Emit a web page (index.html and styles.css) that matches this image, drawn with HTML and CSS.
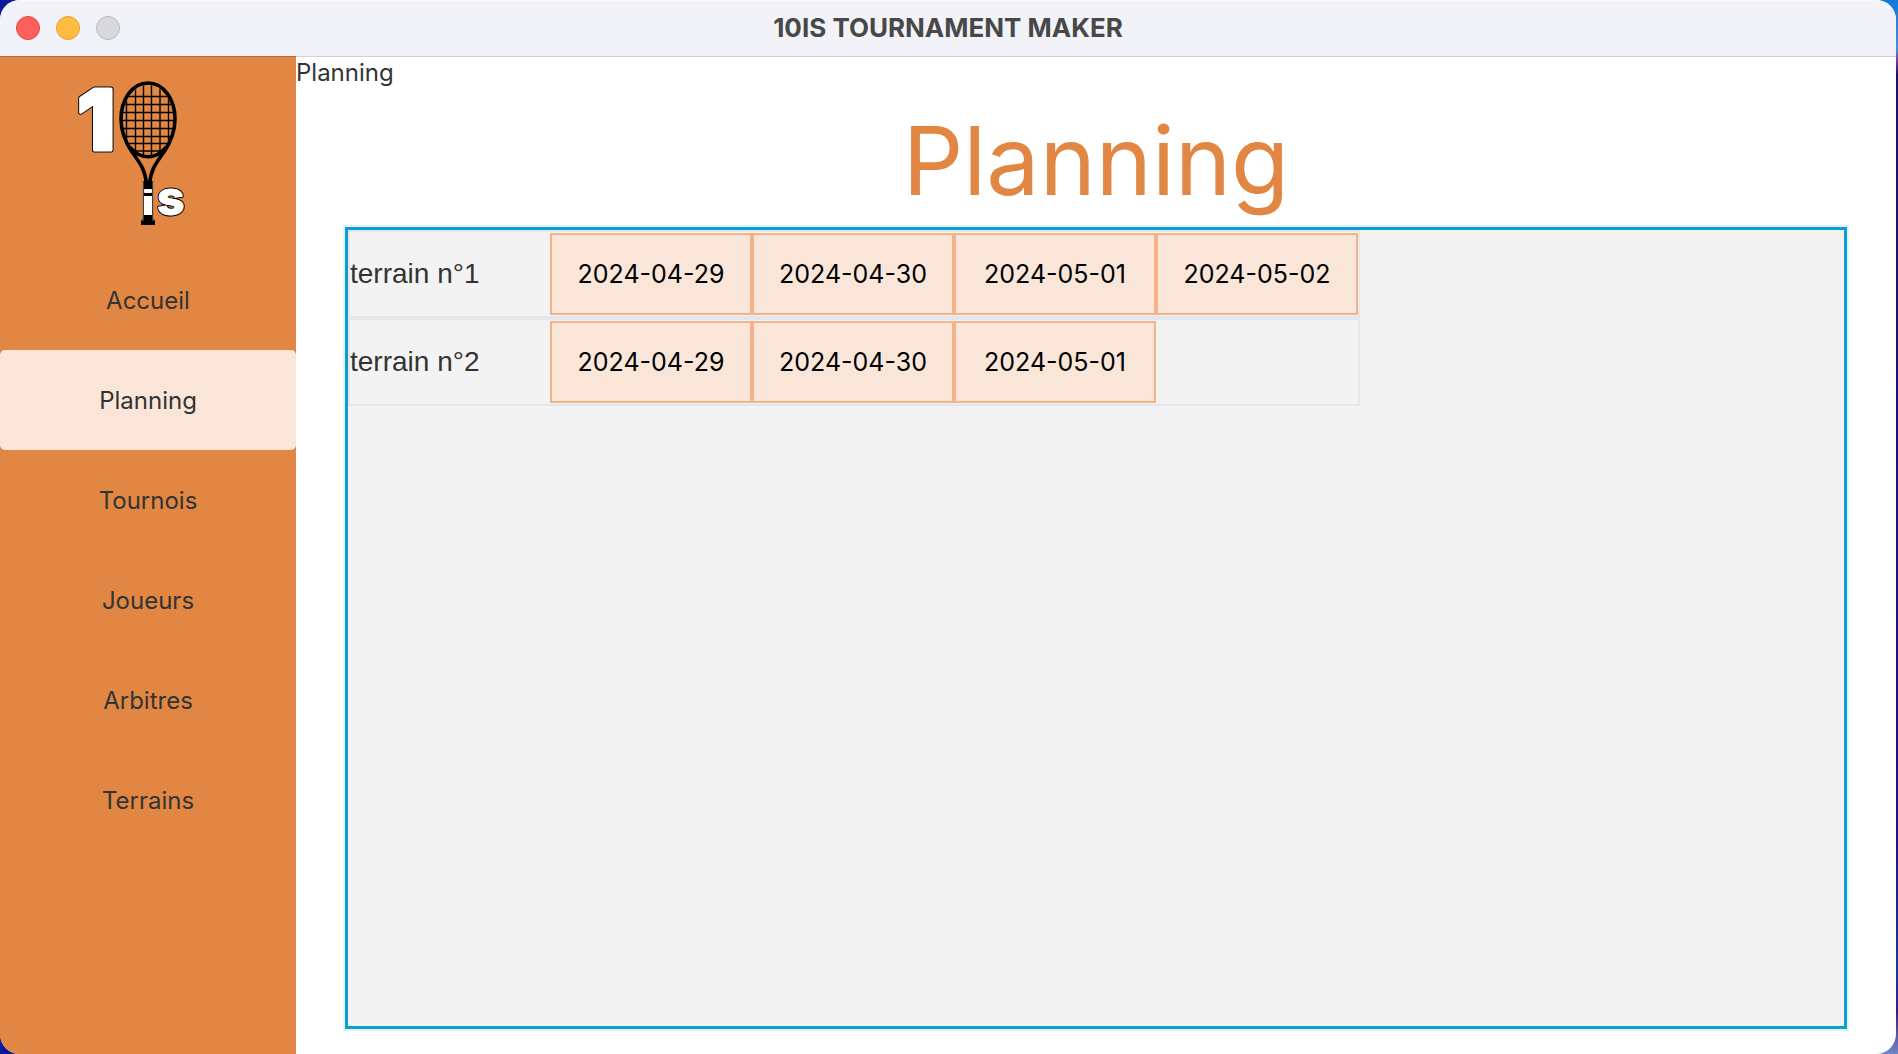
FILE: index.html
```html
<!DOCTYPE html>
<html lang="fr">
<head>
<meta charset="utf-8">
<title>10IS TOURNAMENT MAKER</title>
<link rel="stylesheet" href="styles.css">
</head>
<body>
<div class="window">
  <header class="titlebar">
    <div class="lights">
      <button class="light close" type="button" aria-label="Fermer"></button>
      <button class="light minimize" type="button" aria-label="Réduire"></button>
      <button class="light zoom" type="button" aria-label="Agrandir" disabled></button>
    </div>
    <div class="window-title">10IS TOURNAMENT MAKER</div>
  </header>
  <div class="content">
    <aside class="sidebar">
      <svg class="logo" viewBox="-16 0 148 148" width="148" height="148" role="img" aria-label="10is">
        <g class="digit">
          <text class="outline" x="1" y="69">1</text>
          <text class="fill" x="1" y="69">1</text>
        </g>
        <clipPath id="head"><ellipse cx="72" cy="41" rx="26" ry="37"/></clipPath>
        <path clip-path="url(#head)" fill="none" stroke="#000" stroke-width="1.4" d="M50.500 2V80M59.500 2V80M67.500 2V80M75.500 2V80M84 2V80M92.500 2V80M44 15.500H100M44 23.500H100M44 31.500H100M44 39.500H100M44 47.500H100M44 55.500H100M44 62.500H100M44 70H100"/>
        <path fill="none" stroke="#000" stroke-width="3.600" d="M72 2C56 2 45 19 45 38C45 52 50 62 56 71C64 82 69 88 70.500 103M72 2C88 2 99 19 99 38C99 52 94 62 88 71C80 82 75 88 73.500 103M54 66C64 79 80 79 90 66"/>
        <path d="M67 100H77V137L79 140V144H65V140L67 137Z"/>
        <path d="M67 100V140M77 100V140" stroke="#8b7c70" stroke-width="1"/>
        <path fill="#fff" d="M69 108H75Q76 108 76 109V111Q76 112 75 112H69Q68 112 68 111V109Q68 108 69 108ZM68 115H76V134H68Z"/>
        <g class="letter">
          <text class="outline" x="81" y="134">s</text>
          <text class="fill" x="81" y="134">s</text>
        </g>
      </svg>
      <nav class="menu">
        <a href="#accueil">Accueil</a>
        <a href="#planning" class="active" aria-current="page">Planning</a>
        <a href="#tournois">Tournois</a>
        <a href="#joueurs">Joueurs</a>
        <a href="#arbitres">Arbitres</a>
        <a href="#terrains">Terrains</a>
      </nav>
    </aside>
    <main class="main">
      <div class="crumb">Planning</div>
      <h1>Planning</h1>
      <section class="pane" tabindex="0">
        <table class="schedule">
          <tbody>
            <tr><th scope="row">terrain n°1</th><td class="day">2024-04-29</td><td class="day">2024-04-30</td><td class="day">2024-05-01</td><td class="day">2024-05-02</td></tr>
            <tr><th scope="row">terrain n°2</th><td class="day">2024-04-29</td><td class="day">2024-04-30</td><td class="day">2024-05-01</td><td></td></tr>
          </tbody>
        </table>
      </section>
    </main>
  </div>
</div>
</body>
</html>
```
FILE: styles.css
```css
* { box-sizing: border-box; }

body {
  margin: 0;
  background: linear-gradient(90deg, #0a1a9c 0 50%, transparent 50%),
    linear-gradient(#1578dc 0, #3f8fe0 50px, #7a3aa8 60px, #1a1078 75px, #23108c 80%, #123a9c 92%, #3a1a90 96%, #6f86c4);
  color: #333;
  font-family: Inter, "Liberation Sans", sans-serif;
  font-size: 24px;
}

.window {
  display: flex;
  flex-direction: column;
  min-height: 100vh;
  margin-right: 2px;
  border-radius: 20px;
  background: #fff;
  overflow: hidden;
}

.titlebar {
  display: grid;
  grid-template-columns: 1fr auto 1fr;
  align-items: center;
  height: 57px;
  padding: 0 16px 2px;
  background: #f2f3f9;
  border-top: 1px solid #fafafd;
  border-bottom: 1px solid #d2d2d5;
}

.lights { display: flex; gap: 16px; }

.light {
  width: 24px;
  height: 24px;
  padding: 0;
  border: 1px solid;
  border-radius: 50%;
}
.close { background: #ff605c; border-color: #e2463f; }
.minimize { background: #fdbc40; border-color: #dfa033; }
.zoom { background: #d8d9de; border-color: #b9babf; }

.window-title {
  color: #484848;
  font-size: 26px;
  font-weight: 700;
  line-height: 32px;
}

.content { display: flex; flex: 1; }

.sidebar {
  width: 296px;
  flex: none;
  background: #e18743;
  box-shadow: 0 -1px #b9672b;
  z-index: 1;
}

.logo {
  display: block;
  margin: 24px auto 21px 60px;
  overflow: visible;
}
.logo text { font-family: Inter, "Liberation Sans", sans-serif; stroke-linejoin: round; }
.digit { font-size: 84px; font-weight: 900; }
.letter { font-size: 48px; font-weight: 800; }
.outline { fill: #000; stroke: #000; }
.fill { fill: #fff; stroke: #fff; }
.digit .outline { stroke-width: 5px; }
.digit .fill { stroke-width: 3px; }
.letter .outline { stroke-width: 3px; }
.letter .fill { stroke-width: 1px; }

.menu a {
  display: flex;
  align-items: center;
  justify-content: center;
  height: 100px;
  border-radius: 5px;
  color: #333;
  text-decoration: none;
}
.menu .active { background: #f9e6d8; }

.main {
  display: flex;
  flex: 1;
  flex-direction: column;
  min-width: 0;
}

.crumb { line-height: 32px; }

h1 {
  margin: 12px 0 6px;
  color: #e18743;
  font-size: 95px;
  font-weight: 400;
  line-height: 120px;
  text-align: center;
}

.pane {
  flex: 1;
  margin: 0 49px 25px;
  border: 3px solid #079fd6;
  outline: 2px solid #e1f3f9;
  background: #f3f3f3;
  overflow: auto;
}

.schedule, .schedule tbody { display: block; }

.schedule tr {
  display: flex;
  width: max-content;
  padding: 1px 0;
  border: 2px solid #e2e7eb;
}

.schedule th {
  display: flex;
  align-items: center;
  width: 200px;
  padding: 0;
  font-family: "Liberation Sans", Arial, sans-serif;
  font-size: 28px;
  font-weight: 400;
}

.schedule td {
  display: flex;
  align-items: center;
  justify-content: center;
  width: 202px;
  height: 82px;
  padding: 0;
  font-size: 25px;
}

.schedule .day {
  border: 2px solid #f3b388;
  background: #f9e6d8;
  color: #000;
}
```
